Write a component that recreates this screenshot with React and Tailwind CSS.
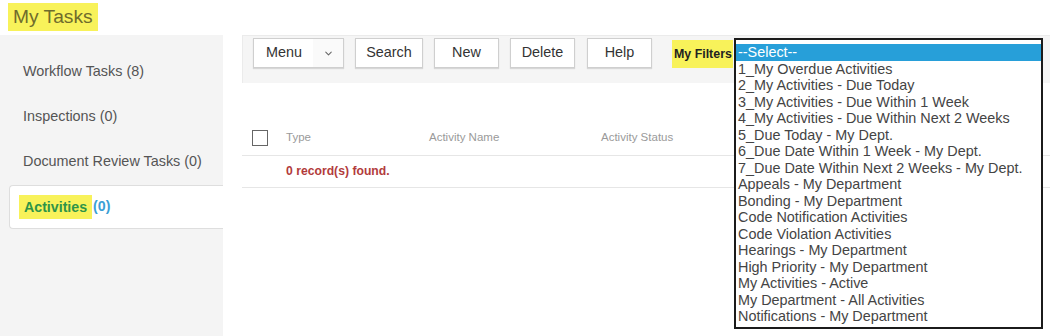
import { ChevronDown } from 'lucide-react'

const filters = [
  '1_My Overdue Activities',
  '2_My Activities - Due Today',
  '3_My Activities - Due Within 1 Week',
  '4_My Activities - Due Within Next 2 Weeks',
  '5_Due Today - My Dept.',
  '6_Due Date Within 1 Week - My Dept.',
  '7_Due Date Within Next 2 Weeks - My Dept.',
  'Appeals - My Department',
  'Bonding - My Department',
  'Code Notification Activities',
  'Code Violation Activities',
  'Hearings - My Department',
  'High Priority - My Department',
  'My Activities - Active',
  'My Department - All Activities',
  'Notifications - My Department',
]

const sideItems = ['Workflow Tasks (8)', 'Inspections (0)', 'Document Review Tasks (0)']

function ToolButton({ children, className = '' }) {
  return (
    <button className={`h-[30px] bg-white border border-[#cfcfcf] shadow-[0_1px_1px_rgba(0,0,0,0.12)] text-[14.4px] text-[#333] flex items-center ${className}`}>
      {children}
    </button>
  )
}

export default function App() {
  return (
    <div className="relative w-[1050px] h-[336px] overflow-hidden bg-white font-['Liberation_Sans',Arial,sans-serif]">
      {/* title */}
      <div className="h-[35px] pl-[8px] pt-[3px]">
        <span className="inline-block h-[28px] leading-[28px] px-[5px] bg-[#f8f25a] text-[19.2px] text-[#6f6c2c]">My Tasks</span>
      </div>

      <div className="flex h-[301px]">
        {/* sidebar */}
        <aside className="w-[223px] bg-[#f4f4f4] pt-[14px]">
          {sideItems.map((t) => (
            <div key={t} className="h-[45px] flex items-center pl-[23px] text-[14.4px] text-[#555]">{t}</div>
          ))}
          <div className="ml-[9px] mt-[1px] h-[44px] bg-white border border-r-0 border-[#dedede] rounded-l-[4px] flex items-center pl-[9px]">
            <span className="bg-[#f8f25a] h-[24px] leading-[24px] px-[5px] font-bold text-[14.2px] text-[#2e9448]">Activities</span>
            <span className="ml-[1px] font-bold text-[14.2px] text-[#3a9fd6]">(0)</span>
          </div>
        </aside>

        {/* main */}
        <main className="flex-1 pl-[19px]">
          <div className="h-[48px] bg-[#f5f5f5] border-t border-l border-[#ebebeb] flex items-start pt-[2px] pl-[10px]">
            <ToolButton className="w-[91px] justify-between pl-[12px] pr-0">
              <span>Menu</span>
              <span className="w-[30px] h-full flex items-center justify-center bg-[#fafafa]">
                <ChevronDown size={11} strokeWidth={2.2} className="text-[#666]" />
              </span>
            </ToolButton>
            <ToolButton className="w-[68px] ml-[11px] justify-center">Search</ToolButton>
            <ToolButton className="w-[65px] ml-[11px] justify-center">New</ToolButton>
            <ToolButton className="w-[65px] ml-[11px] justify-center">Delete</ToolButton>
            <ToolButton className="w-[65px] ml-[12px] justify-center">Help</ToolButton>
            <span className="ml-[20px] mt-[2px] h-[28px] leading-[28px] bg-[#f8f25a] pl-[2px] pr-[1px] font-bold text-[12.4px] text-[#222]">My Filters</span>
          </div>

          {/* table */}
          <div className="mt-[37px]">
            <div className="h-[36px] flex items-center border-b border-[#e6e6e6] text-[11.5px] text-[#9a9a9a]">
              <span className="ml-[10px] w-[16px] h-[16px] border border-[#666] bg-white" />
              <span className="ml-[18px] w-[143px]">Type</span>
              <span className="w-[172px]">Activity Name</span>
              <span>Activity Status</span>
            </div>
            <div className="h-[32px] flex items-center border-b border-[#e6e6e6] pl-[44px] font-bold text-[12.2px] text-[#b23b3b]">
              0 record(s) found.
            </div>
          </div>
        </main>
      </div>

      {/* open filter list */}
      <div className="absolute left-[734px] top-[38px] w-[309px] h-[291px] bg-white border-2 border-[#1b1b1b] pt-[4px] text-[14.4px] leading-[16.5px] text-[#444]">
        <div className="bg-[#279fd9] text-white pl-[2px]">--Select--</div>
        {filters.map((f) => (
          <div key={f} className="pl-[2px] whitespace-nowrap">{f}</div>
        ))}
      </div>
    </div>
  )
}
